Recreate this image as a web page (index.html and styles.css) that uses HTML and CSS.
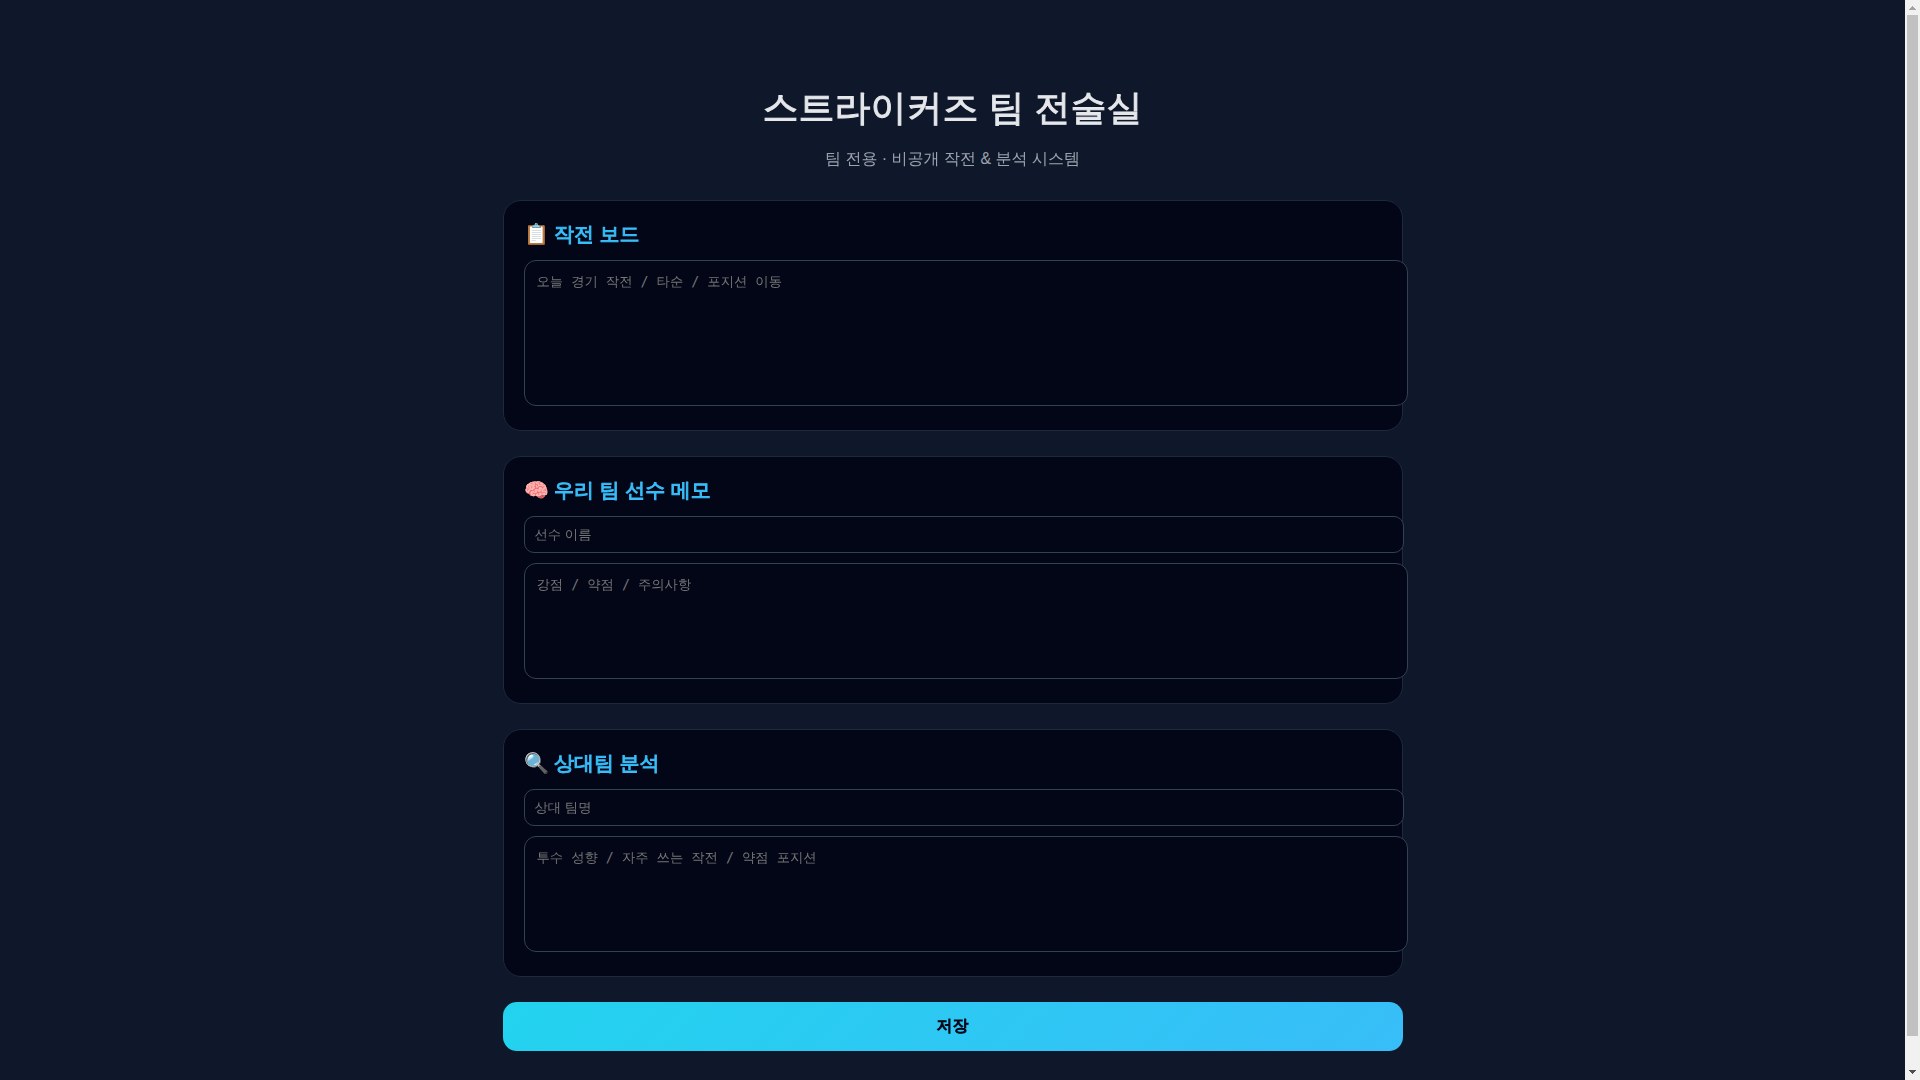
FILE: index.html
```html
<!DOCTYPE html>
<html lang="ko">
<head>
    <meta charset="UTF-8">
    <meta name="viewport" content="width=device-width, initial-scale=1.0">
    <title>스트라이커즈 팀 전술실</title>
    <link rel="stylesheet" href="styles.css">
</head>
<body>
    <div class="container">
        <h1>스트라이커즈 팀 전술실</h1>
        <p class="subtitle">팀 전용 · 비공개 작전 &amp; 분석 시스템</p>

        <div class="card">
            <h2>📋 작전 보드</h2>
            <textarea class="board" id="board" aria-label="작전 보드" placeholder="오늘 경기 작전 / 타순 / 포지션 이동"></textarea>
        </div>

        <div class="card">
            <h2>🧠 우리 팀 선수 메모</h2>
            <input type="text" id="player-name" aria-label="선수 이름" placeholder="선수 이름">
            <textarea id="player-memo" aria-label="선수 메모" placeholder="강점 / 약점 / 주의사항"></textarea>
        </div>

        <div class="card">
            <h2>🔍 상대팀 분석</h2>
            <input type="text" id="enemy-name" aria-label="상대 팀명" placeholder="상대 팀명">
            <textarea id="enemy-memo" aria-label="상대팀 분석" placeholder="투수 성향 / 자주 쓰는 작전 / 약점 포지션"></textarea>
        </div>

        <button type="button" class="save" onclick="saveAll()">저장</button>
    </div>

    <div class="scrollbar" aria-hidden="true">
        <svg class="arrow up" viewBox="0 0 15 15"><path d="M7 6h1v1h1v1h1v1h1v1H4V9h1V8h1V7h1z"/></svg>
        <div class="thumb"></div>
        <div class="rest"></div>
        <svg class="arrow down" viewBox="0 0 15 15"><path d="M4 5h7v1h-1v1H9v1H8v1H7V8H6V7H5V6H4z"/></svg>
    </div>

    <script>
        const fields = ['board', 'player-name', 'player-memo', 'enemy-name', 'enemy-memo'];

        function saveAll() {
            fields.forEach(id => {
                localStorage.setItem(id, document.getElementById(id).value);
            });
            alert('저장되었습니다.');
        }
    </script>
</body>
</html>
```
FILE: styles.css
```css
body {
    margin: 0;
    padding-right: 15px;
    background-color: #0f172a;
    color: #e5e7eb;
    font-family: "Liberation Sans", "WenQuanYi Zen Hei", "Noto Sans CJK KR", sans-serif;
}
.container {
    max-width: 900px;
    margin: 0 auto;
    padding: 60px 20px;
}
h1 {
    margin: 24px 0 16px;
    font-size: 36px;
    text-align: center;
    -webkit-text-stroke: 1px;
}
.subtitle {
    margin: 0 0 30px;
    text-align: center;
    color: #9ca3af;
}
.card {
    margin-bottom: 25px;
    padding: 20px;
    background-color: #020617;
    border: 1px solid #1e293b;
    border-radius: 18px;
}
.card h2 {
    margin: 0 0 12px;
    font-size: 20px;
    color: #38bdf8;
    -webkit-text-stroke: 1px;
}
.card input,
.card textarea {
    width: 100%;
    background-color: #020617;
    border: 1px solid #334155;
    color: #e5e7eb;
}
.card input {
    margin-bottom: 10px;
    padding: 10px;
    border-radius: 10px;
    font-family: "Liberation Sans", "WenQuanYi Zen Hei", "Noto Sans CJK KR", sans-serif;
}
.card textarea {
    height: 90px;
    padding: 12px;
    border-radius: 12px;
    font-family: "DejaVu Sans Mono", "WenQuanYi Zen Hei", "Noto Sans CJK KR", monospace;
    resize: none;
}
.card .board {
    height: 120px;
}
.save {
    width: 100%;
    padding: 14px;
    border: none;
    border-radius: 14px;
    background: linear-gradient(135deg, #22d3ee, #38bdf8);
    color: #020617;
    font-family: "Liberation Sans", "WenQuanYi Zen Hei", "Noto Sans CJK KR", sans-serif;
    font-size: 16px;
    font-weight: bold;
    -webkit-text-stroke: 1px;
    cursor: pointer;
}
.scrollbar {
    position: fixed;
    top: 0;
    right: 0;
    bottom: 0;
    width: 15px;
    display: flex;
    flex-direction: column;
    background-color: #f1f1f1;
}
.arrow {
    width: 15px;
    height: 15px;
}
.arrow.up {
    fill: #a3a3a3;
}
.arrow.down {
    fill: #505050;
}
.thumb {
    flex: 35;
    margin: 0 2px;
    background-color: #c1c1c1;
}
.rest {
    flex: 1;
}
```
